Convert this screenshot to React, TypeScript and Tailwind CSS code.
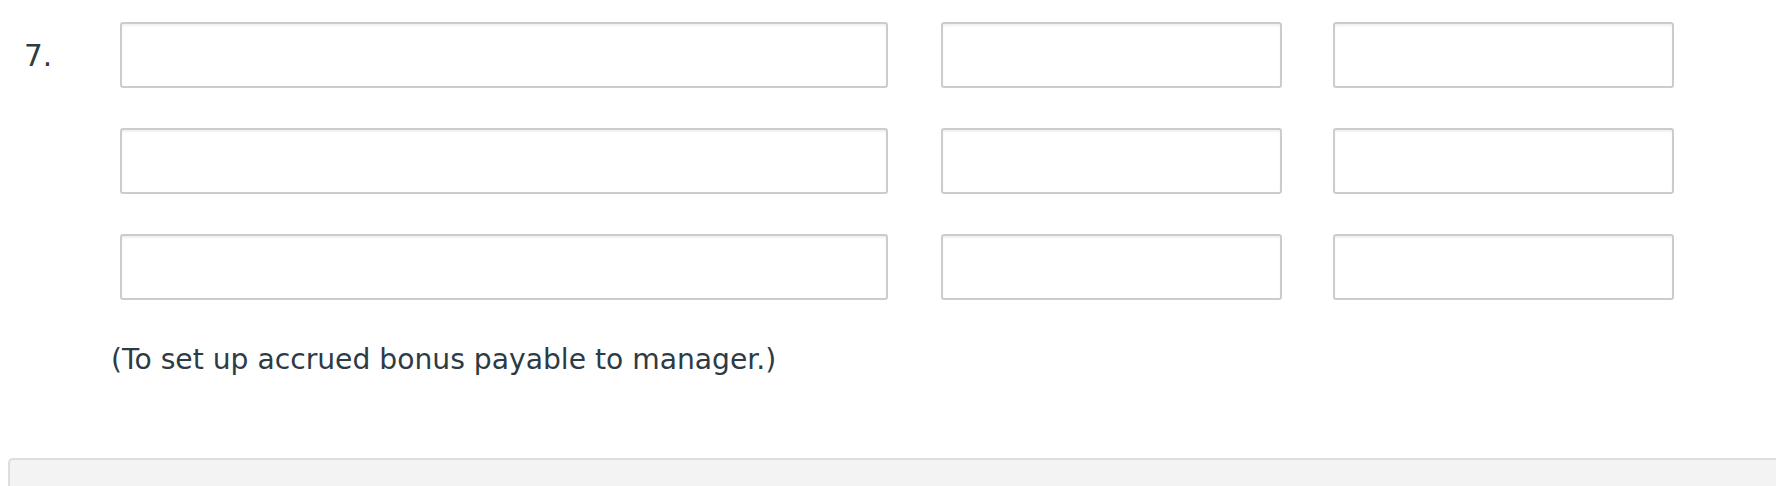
import React from 'react';

const Box: React.FC<{ w: string }> = ({ w }) => (
  <input
    type="text"
    className={`${w} h-[66px] shrink-0 rounded-[3px] border-2 border-[#cccccc] bg-white shadow-[inset_0_2px_2px_rgba(0,0,0,0.06)] outline-none`}
  />
);

const rows = [0, 1, 2];

export default function App() {
  return (
    <div
      className="relative h-[486px] w-full overflow-hidden bg-white text-[#2d3b45]"
      style={{ fontFamily: '"DejaVu Sans", Verdana, sans-serif' }}
    >
      <div className="flex pt-[22px]">
        <div className="w-[120px] shrink-0 pl-[24px] pt-[16px] text-[29.5px] leading-[36px]">
          7.
        </div>
        <div className="flex flex-col gap-[40px]">
          {rows.map((r) => (
            <div key={r} className="flex">
              <Box w="w-[768px]" />
              <div className="ml-[53px]">
                <Box w="w-[341px]" />
              </div>
              <div className="ml-[51px]">
                <Box w="w-[341px]" />
              </div>
            </div>
          ))}
        </div>
      </div>

      <p className="mt-[42px] pl-[111px] text-[28.2px] leading-[36px]">
        (To set up accrued bonus payable to manager.)
      </p>

      <div className="ml-[8px] mt-[80px] h-[40px] rounded-tl-[5px] border-l-2 border-t-2 border-[#dddddd] bg-[#f3f3f3]" />
    </div>
  );
}
